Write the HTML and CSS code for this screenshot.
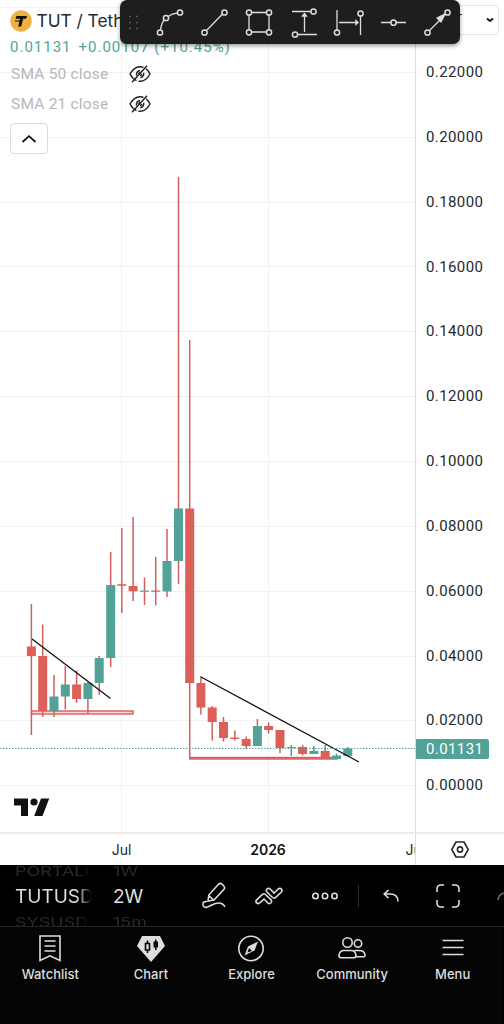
FILE: index.html
```html
<!doctype html>
<html lang="en">

<head>
    <meta charset="utf-8">
    <title>TUT / TetherUS</title>
    <link rel="stylesheet" href="styles.css">
</head>

<body>
    <main class="chart">
        <section class="plot">
            <svg class="candles" width="415" height="833" viewBox="0 0 415 833">
                <!-- grid -->
                <path stroke="#f1f1f2" d="M0 7.5H415M0 72.5H415M0 137.5H415M0 202.5H415M0 266.5H415M0 331.5H415M0 396.5H415M0 461.5H415M0 526.5H415M0 591.5H415M0 656.5H415M0 720.5H415M0 785.5H415M121.5 0V833M268.5 0V833" />
                <!-- support boxes -->
                <rect class="box" x="31.5" y="711" width="101.500" height="3" />
                <rect class="box" x="189.800" y="757.500" width="147" height="1.500" />
                <!-- wicks -->
                <path class="wick" d="M31.400 604V735M42.700 624.500V717M54 675V717M65.300 666V709.500M76.600 670.500V703M87.900 682V713.500M99.200 656V695M110.700 552V667M121.800 528V613M133.100 517V601M144.500 577.500V605M155.700 557V605.500M167 529V597M178.500 177V584M189.700 340V758M200.900 676V714.500M212.200 706V740.500M223.500 717V741.500M234.800 730.500V740.500M246.200 736.500V748.500M257.400 719V745M268.600 722.500V733.500M280 730V753M302.600 745V755.500M325.200 745V759" />
                <path class="wick wick-up" d="M291.300 745V756M313.900 746V754M336.500 753.500V759M347.800 747V757" />
                <!-- bodies -->
                <path class="body down" d="M31.400 646.500V656M42.700 656V711M76.600 684.500V699M121.800 584.300V585.700M133.100 586V591.300M155.700 590.500V591.800M189.700 508.500V683M200.900 683V707.500M212.200 707.500V722M223.500 722V738M234.800 737.500V739M246.200 739V746M268.600 726V730M280 730V748M302.600 747V754M325.200 751V759" />
                <path class="body up" d="M54 696.500V711M65.300 684.500V696.500M87.900 683V699M99.200 658V683M110.700 585V658M144.500 590.500V591.800M167 561V591.500M178.500 508.500V561M257.400 726V746M291.300 747V748M313.900 751V754M336.500 755.500V759M347.800 748.500V756" />
                <path class="trend" d="M32 639L110.500 698.500M201 677L359 762" />
                <path class="last" d="M0 748.500H415" />
            </svg>
            <svg class="brand" width="36" height="18" viewBox="0 0 36 18">
                <path d="M0 .5H14V18H7V7.500H0ZM27 .5H35.200L28.500 18H20.200Z" />
                <circle cx="20" cy="4" r="3.600" />
            </svg>
            <div class="legend">
                <div class="symbol">
                    <svg width="22" height="22" viewBox="0 0 22 22">
                        <circle cx="11" cy="11" r="10.700" fill="#f0b13f" />
                        <path d="M6.500 6H17L16 8.800H13.200L11.200 16.500H8.200L10 8.800H5.500Z" fill="#111" />
                        <path d="M5 11H10" stroke="#111" />
                    </svg>
                    <span>TUT / TetherUS</span>
                </div>
                <div class="quote"><span>0.01131</span><span>+0.00107 (+10.45%)</span></div>
                <div class="study">
                    <span>SMA 50 close</span>
                    <svg class="icon eye" width="22" height="18" viewBox="0 0 22 18">
                        <path d="M7.500 15.600Q3.500 13.800 1 9Q5 1.700 11 1.700Q13 1.700 14.500 2.300M17 3.800Q19.300 5.600 21 9Q17 16.300 11 16.300Q10 16.300 9.500 16.200" />
                        <path d="M7.500 10.500Q7 6.500 11 5.500M14.700 7.800Q15 12 11.300 12.700M9.600 9.300Q9.700 7.600 11.500 7.500M12.800 9Q12.500 10.500 11 10.500" />
                        <path d="M3 17.200L18 .8" />
                    </svg>
                </div>
                <div class="study">
                    <span>SMA 21 close</span>
                    <svg class="icon eye" width="22" height="18" viewBox="0 0 22 18">
                        <path d="M7.500 15.600Q3.500 13.800 1 9Q5 1.700 11 1.700Q13 1.700 14.500 2.300M17 3.800Q19.300 5.600 21 9Q17 16.300 11 16.300Q10 16.300 9.500 16.200" />
                        <path d="M7.500 10.500Q7 6.500 11 5.500M14.700 7.800Q15 12 11.300 12.700M9.600 9.300Q9.700 7.600 11.500 7.500M12.800 9Q12.500 10.500 11 10.500" />
                        <path d="M3 17.200L18 .8" />
                    </svg>
                </div>
                <button class="collapse">
                    <svg width="16" height="10" viewBox="0 0 16 10">
                        <path d="M1.500 8L8 2.200L14.500 8" />
                    </svg>
                </button>
            </div>
        </section>

        <aside class="prices">
            <span>0.22000</span>
            <span>0.20000</span>
            <span>0.18000</span>
            <span>0.16000</span>
            <span>0.14000</span>
            <span>0.12000</span>
            <span>0.10000</span>
            <span>0.08000</span>
            <span>0.06000</span>
            <span>0.04000</span>
            <span>0.02000</span>
            <span>0.00000</span>
            <b class="price-tag">0.01131</b>
            <div class="currency">
                <span>USDT</span>
                <svg width="8" height="6" viewBox="0 0 8 6">
                    <path d="M1 1.500L4 4L7 1.500" />
                </svg>
            </div>
        </aside>

        <div class="times">
            <span class="jul">Jul</span>
            <b class="year">2026</b>
            <span class="jun">Jun</span>
        </div>
        <div class="axis-settings">
            <svg class="icon" width="18" height="17" viewBox="0 0 18 17">
                <path d="M5 1H13L17.200 8.500L13 16H5L.8 8.500Z" />
                <circle cx="9" cy="8.500" r="2.600" />
            </svg>
        </div>
    </main>

    <div class="drawbar">
        <svg width="340" height="44" viewBox="0 0 340 44">
            <path class="grip" d="M10 16.500h0M17 16.500h0M10 22.500h0M17 22.500h0M10 28.500h0M17 28.500h0" />
            <path d="M40.500 29.500Q42 22 44.500 19.500M48 16.500Q52 13.500 57.500 13M86.500 30.500L102.500 14M129 14.500V30M149 14.500V30M131 12.500H147M131 32H147M172 11.500H191M178 34.500H197M184.500 32V15M217 10V30M219 22.500H238M240.500 15.500V35M261 22.500H271M276 22.500H286M309.500 30.500L322 18" />
            <path class="arrow" d="M182.500 16L184.500 13.500L186.500 16ZM236 20.500L238 22.500L236 24.500ZM317 18L325 14L321 22Z" />
            <circle cx="40" cy="32.500" r="2.600" />
            <circle cx="46" cy="18" r="2.600" />
            <circle cx="60" cy="12.500" r="2.600" />
            <circle cx="84.500" cy="32.500" r="2.600" />
            <circle cx="104.500" cy="12.500" r="2.600" />
            <circle cx="129" cy="12.500" r="2.600" />
            <circle cx="149" cy="12.500" r="2.600" />
            <circle cx="129" cy="32.300" r="2.600" />
            <circle cx="149" cy="32.300" r="2.600" />
            <circle cx="193.500" cy="11.500" r="2.600" />
            <circle cx="175" cy="34.500" r="2.600" />
            <circle cx="217" cy="32.500" r="2.600" />
            <circle cx="240.500" cy="13.500" r="2.600" />
            <circle cx="273.500" cy="22.700" r="2.600" />
            <circle cx="307.500" cy="32.500" r="2.600" />
            <circle cx="327.500" cy="12.500" r="2.600" />
        </svg>
    </div>

    <div class="toolbar">
        <div class="picker picker-symbol">
            <span>PORTALUSDT</span>
            <strong>TUTUSDT</strong>
            <span>SYSUSDT</span>
        </div>
        <div class="picker picker-interval">
            <span>1W</span>
            <strong>2W</strong>
            <span>15m</span>
        </div>
        <div class="tools">
            <svg class="icon" width="24" height="28" viewBox="0 0 24 28">
                <path d="M6 19L6.800 13L16.500 2.200Q18.200 .7 20 2.200L21.800 4Q23.200 5.700 22 7.300L12 18L6 19ZM6.800 13.500L11.500 18" />
                <path d="M5 19.500Q1 19 .9 22.500Q1.300 26 5 25.200C10 23.500 12 21 16.500 21Q21 21 23 25" />
            </svg>
            <svg class="icon" width="28" height="18" viewBox="0 0 28 18">
                <path d="M1.600 12.800L7.500 7.300Q9 6.200 10.500 7.500L16 12.800Q17.300 14.600 15.800 16Q14.300 17.200 12.800 15.800L9 12L4.800 15.900Q3 17.200 1.600 15.900Q.3 14.400 1.600 12.800Z" />
                <path d="M12 2Q13.500 .6 15.200 2L19 6L23.200 2Q25 .6 26.400 2Q27.700 3.500 26.400 5L20.500 10.600Q19 11.700 17.500 10.500L12 5Q10.700 3.400 12 2Z" />
            </svg>
            <svg class="icon" width="26" height="8" viewBox="0 0 26 8">
                <circle cx="3.500" cy="4" r="2.700" />
                <circle cx="13" cy="4" r="2.700" />
                <circle cx="22.500" cy="4" r="2.700" />
            </svg>
            <i class="divider"></i>
            <svg class="icon" width="16" height="13" viewBox="0 0 16 13">
                <path d="M5.500 1L1.200 5L5.500 9M1.500 5H8Q15 5.500 15 12.500" />
            </svg>
            <svg class="icon corners" width="24" height="24" viewBox="0 0 24 24">
                <path d="M1 8V5Q1 1 5 1H8M16 1H19Q23 1 23 5V8M23 16V19Q23 23 19 23H16M8 23H5Q1 23 1 19V16" />
            </svg>
            <svg class="icon next" width="7" height="10" viewBox="0 0 7 10">
                <path d="M1 9Q1 4 7 2" />
            </svg>
        </div>
    </div>

    <nav class="tabs">
        <a>
            <svg class="icon" width="28" height="28" viewBox="0 0 28 28">
                <path d="M4 2H24V26.500L14 21.800L4 26.500ZM8.500 7H19.500M8.500 12H19.500M8.500 17H19.500" />
            </svg>
            Watchlist
        </a>
        <a>
            <svg width="28" height="28" viewBox="0 0 28 28">
                <path d="M5 2H23L28 12L14 28L0 12Z" fill="#dedede" />
                <path d="M8.500 9.500H12.500V16H8.500ZM10.500 6.500V9M10.500 16V19" fill="none" stroke="#050505" stroke-width="1.600" />
                <path d="M16.500 7.500H21V13.500H16.500ZM18 5.500H19.500V16H18Z" fill="#050505" />
            </svg>
            Chart
        </a>
        <a>
            <svg class="icon" width="28" height="28" viewBox="0 0 28 28">
                <circle cx="14" cy="14.500" r="12.200" />
                <path d="M21 7.500L17.500 16.500L7.500 21.500L11 12.500Z" stroke="none" fill="#dedede" />
                <path d="M12 14L15 17L10.500 18.500Z" stroke="none" fill="#050505" />
            </svg>
            Explore
        </a>
        <a>
            <svg class="icon" width="28" height="28" viewBox="0 0 28 28">
                <circle cx="9.500" cy="8.500" r="4.700" />
                <circle cx="20" cy="9.500" r="3.700" />
                <path d="M1 21.500Q1.500 16.500 6 16.500H13Q17.500 16.500 18 21.500Q18 23.700 16 23.700H3Q1 23.700 1 21.500ZM16.500 16.500H21Q26.500 16.500 27 21Q27 22.700 25.500 22.700H18" />
            </svg>
            Community
        </a>
        <a>
            <svg class="icon" width="28" height="28" viewBox="0 0 28 28">
                <path d="M3.500 6.500H24.500M3.500 13.500H24.500M3.500 20.500H24.500" />
            </svg>
            Menu
        </a>
    </nav>
</body>

</html>
```
FILE: styles.css
```css
* {
    box-sizing: border-box;
}

body {
    margin: 0;
    width: 504px;
    height: 1024px;
    overflow: hidden;
    position: relative;
    display: flex;
    flex-direction: column;
    background: #000;
    color: #26282e;
    font-family: Inter, "Liberation Sans", sans-serif;
    font-size: 15px;
}

svg {
    display: block;
    flex: none;
}

.icon {
    fill: none;
    stroke: currentColor;
    stroke-width: 1.6;
}

.eye {
    stroke-width: 1.4;
}

/* chart */
.chart {
    display: grid;
    grid-template-columns: 415px 89px;
    grid-template-rows: 832px 33px;
    height: 865px;
    flex: none;
    background: #fff;
}

.plot {
    position: relative;
    overflow: hidden;
}

.box {
    fill: #f8d7d8;
    stroke: #db5c5c;
    stroke-width: 1.4;
}

.wick {
    stroke: #d0605e;
    stroke-width: 1.5;
}

.wick-up {
    stroke: #579d92;
}

.body {
    stroke-width: 9;
}

.down {
    stroke: #dc6058;
}

.up {
    stroke: #52a297;
}

.trend {
    stroke: #111;
    stroke-width: 1.3;
}

.last {
    stroke: #52a297;
    stroke-dasharray: 1.5 1.5;
}

.brand {
    position: absolute;
    left: 14px;
    top: 798px;
    fill: #111;
}

.legend {
    position: absolute;
    left: 10px;
    top: 9px;
}

.symbol {
    display: flex;
    align-items: center;
    gap: 4.5px;
    height: 23px;
    font-size: 17.3px;
    white-space: nowrap;
}

.quote {
    display: flex;
    gap: 7px;
    height: 27px;
    padding-top: 5px;
    font-family: Roboto, sans-serif;
    line-height: 20px;
    letter-spacing: 1px;
    color: #52a297;
}

.study {
    display: flex;
    align-items: center;
    height: 30px;
    padding-left: 1px;
    font-family: Roboto, sans-serif;
    font-size: 15.5px;
    color: #b7b7b7;
    letter-spacing: .2px;
}

.study span {
    width: 118px;
}

.study svg {
    color: #1c1c1c;
}

.collapse {
    display: flex;
    align-items: center;
    justify-content: center;
    width: 38px;
    height: 31px;
    margin-top: 4px;
    padding: 0;
    border: 1px solid #d9d9d9;
    border-radius: 4px;
    background: #fff;
}

.collapse path,
.currency path {
    fill: none;
    stroke: #111;
    stroke-width: 1.8;
}

/* axes */
.prices {
    position: relative;
    display: flex;
    flex-direction: column;
    padding: 40px 0 0 10px;
    border-left: 1px solid #dcdcdc;
    font-family: Roboto, sans-serif;
}

.prices > span {
    height: 64.85px;
    flex: none;
    line-height: 65px;
    letter-spacing: .4px;
}

.price-tag {
    position: absolute;
    left: 0;
    top: 739px;
    width: 73px;
    height: 20px;
    padding-left: 10px;
    border-radius: 0 2px 2px 0;
    background: #52a297;
    color: #fff;
    font-weight: 400;
    line-height: 20px;
    letter-spacing: .4px;
}

.currency {
    position: absolute;
    right: 5px;
    top: 5px;
    display: flex;
    align-items: center;
    justify-content: space-between;
    width: 78px;
    height: 30px;
    padding: 0 4px 0 5px;
    border: 1px solid #e6e6e6;
    border-radius: 4px;
    background: #fff;
    font-size: 14px;
}

.times {
    overflow: hidden;
    display: grid;
    grid-template-columns: 243px 50px 122px;
    line-height: 31px;
    text-align: center;
    border-top: 2px solid #ebebeb;
    font-size: 14px;
}

.year {
    font-weight: 600;
    color: #111;
}

.jun {
    margin-right: -15px;
    text-align: right;
}

.axis-settings {
    display: flex;
    align-items: center;
    justify-content: center;
    border-top: 2px solid #ebebeb;
    border-left: 1px solid #dcdcdc;
}

/* floating drawing tools */
.drawbar {
    position: absolute;
    left: 120px;
    top: 0;
    width: 340px;
    height: 44px;
    border-radius: 7px;
    background: #1e1e1e;
    box-shadow: 0 2px 4px rgba(0, 0, 0, .4);
}

.drawbar path,
.drawbar circle {
    fill: none;
    stroke: #dedede;
    stroke-width: 1.3;
}

.drawbar circle {
    stroke-width: 1.5;
}

.drawbar .grip {
    stroke: #5c5c5c;
    stroke-width: 2;
    stroke-linecap: round;
}

.drawbar .arrow {
    fill: #dedede;
}

/* bottom toolbar */
.toolbar {
    display: flex;
    height: 62px;
    flex: none;
    overflow: hidden;
    border-bottom: 1px solid #242424;
    color: #dedede;
}

.picker {
    display: flex;
    flex-direction: column;
    justify-content: center;
    overflow: hidden;
    padding-top: 2px;
    line-height: 25px;
}

.picker strong {
    font-size: 19px;
    font-weight: 400;
    line-height: 26px;
}

.picker span {
    color: #292929;
    font-size: 18px;
    transform: scaleY(.75);
}

.picker-symbol {
    width: 77px;
    margin-left: 15px;
    -webkit-mask-image: linear-gradient(90deg, #000 80%, transparent);
    mask-image: linear-gradient(90deg, #000 80%, transparent);
}

.picker-interval {
    width: 75px;
    margin-left: 21px;
}

.tools {
    display: flex;
    align-items: center;
    flex: 1;
    padding-left: 14px;
}

.tools svg:nth-child(2) {
    margin-left: 29px;
}

.tools svg:nth-child(3) {
    margin-left: 29px;
}

.divider {
    width: 1px;
    height: 22px;
    margin: 0 24px 0 20px;
    background: #2b2b2b;
}

.corners {
    margin-left: 37px;
}

.next {
    margin-left: 37px;
    opacity: .5;
}

/* tabs */
.tabs {
    display: grid;
    grid-template-columns: repeat(5, 1fr);
    height: 97px;
    margin-right: 1px;
    background: #050505;
    color: #dedede;
    font-size: 13px;
    font-weight: 500;
}

.tabs a {
    display: flex;
    flex-direction: column;
    align-items: center;
    gap: 4px;
    padding-top: 7px;
    line-height: 17px;
}
```
